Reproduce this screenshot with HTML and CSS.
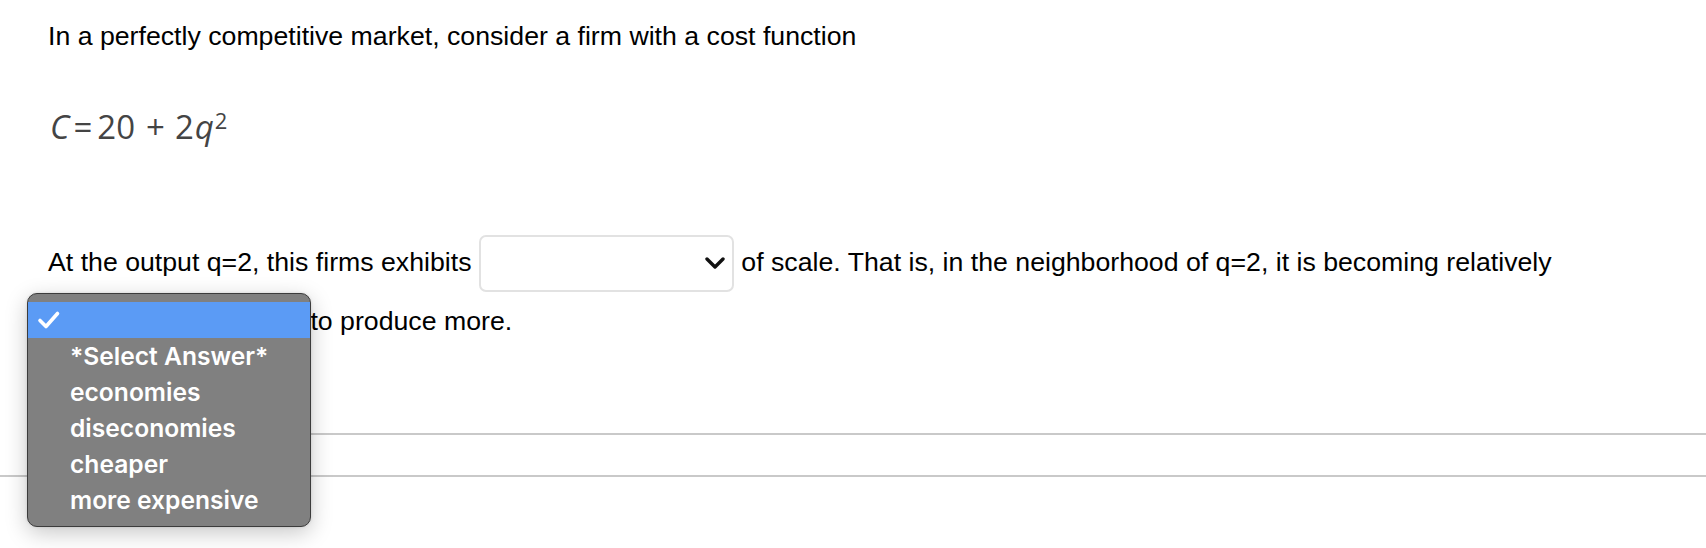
FILE: index.html
```html
<!DOCTYPE html>
<html>
<head>
<meta charset="utf-8">
<link rel="stylesheet" href="styles.css">
</head>
<body>
<div class="page">
  <div class="content">
    <p class="intro">In a perfectly competitive market, consider a firm with a cost function</p>
    <div class="math"><span class="mi c">C</span><span class="mo eq">=</span><span class="mn">20</span><span class="mo plus">+</span><span class="mn">2</span><span class="mi q">q</span><sup class="sup">2</sup></div>
    <p class="question">At the output q=2, this firms exhibits <span class="select"><svg class="chev" width="20" height="12" viewBox="0 0 20 12"><polyline points="2,2 10,10 18,2" fill="none" stroke="#111" stroke-width="3.4" stroke-linecap="round" stroke-linejoin="round"/></svg></span> of scale. That is, in the neighborhood of q=2, it is becoming relatively <span class="select"><svg class="chev" width="20" height="12" viewBox="0 0 20 12"><polyline points="2,2 10,10 18,2" fill="none" stroke="#111" stroke-width="3.4" stroke-linecap="round" stroke-linejoin="round"/></svg></span> to produce more.</p>
    <hr class="rule-inner">
  </div>
  <hr class="rule-full">

  <div class="menu">
    <div class="item selected"><svg class="check" width="24" height="20" viewBox="0 0 24 20"><polyline points="3,10.5 9,16.5 20.5,3.5" fill="none" stroke="#fff" stroke-width="3.6" stroke-linecap="round" stroke-linejoin="round"/></svg></div>
    <div class="item">*Select Answer*</div>
    <div class="item">economies</div>
    <div class="item">diseconomies</div>
    <div class="item">cheaper</div>
    <div class="item">more expensive</div>
  </div>
</div>
</body>
</html>
```

FILE: styles.css
```css
html, body {
  margin: 0;
  padding: 0;
  background: #ffffff;
}

.page {
  position: relative;
  width: 1706px;
  height: 548px;
  overflow: hidden;
  font-family: "Liberation Sans", Arial, Helvetica, sans-serif;
  color: #000;
}

.content {
  padding: 22px 0 0 48px;
}

.intro {
  margin: 0;
  font-size: 26.7px;
  line-height: 28px;
}

.math {
  margin-top: 57px;
  height: 40px;
  font-family: "Open Sans", "DejaVu Sans", sans-serif;
  font-size: 33px;
  line-height: 40px;
  color: #444;
  padding-left: 2px;
}

.math .mi {
  font-style: italic;
}

.math .c {
  margin-right: 4px;
}

.math .eq {
  margin-right: 5px;
}

.math .plus {
  margin: 0 10px 0 11px;
}

.math .q {
  margin-left: 1px;
}

.math .sup {
  font-size: 22px;
  vertical-align: top;
  position: relative;
  top: -7px;
  margin-left: 1px;
}

.question {
  margin: 86px 0 0 0;
  font-size: 26.7px;
  line-height: 58px;
  width: 1650px;
}

.select {
  display: inline-block;
  position: relative;
  box-sizing: border-box;
  width: 255px;
  height: 57px;
  border: 2px solid #e2e2e2;
  border-radius: 7px;
  background: #fff;
  vertical-align: middle;
}

.chev {
  position: absolute;
  right: 7px;
  top: 20px;
}

.rule-inner {
  margin: 81px 0 0 0;
  border: 0;
  height: 2px;
  background: #c9c9c9;
}

.rule-full {
  margin: 40px 0 0 0;
  border: 0;
  height: 2px;
  background: #c9c9c9;
}

.menu {
  position: absolute;
  left: 27px;
  top: 293px;
  width: 284px;
  box-sizing: border-box;
  padding: 8px 0 8px 0;
  background: #808080;
  border: 1px solid #3c3c3c;
  border-radius: 10px;
  box-shadow: 0 6px 22px rgba(0, 0, 0, 0.22), 0 0 3px rgba(0, 0, 0, 0.12);
  font-family: "Inter", "Roboto", sans-serif;
  font-weight: 600;
  font-size: 24.6px;
  color: #fff;
}

.item {
  height: 36px;
  line-height: 36px;
  padding-left: 42px;
  white-space: nowrap;
}

.item.selected {
  position: relative;
  background: #5b9bf5;
}

.check {
  position: absolute;
  left: 9px;
  top: 8px;
}
```
